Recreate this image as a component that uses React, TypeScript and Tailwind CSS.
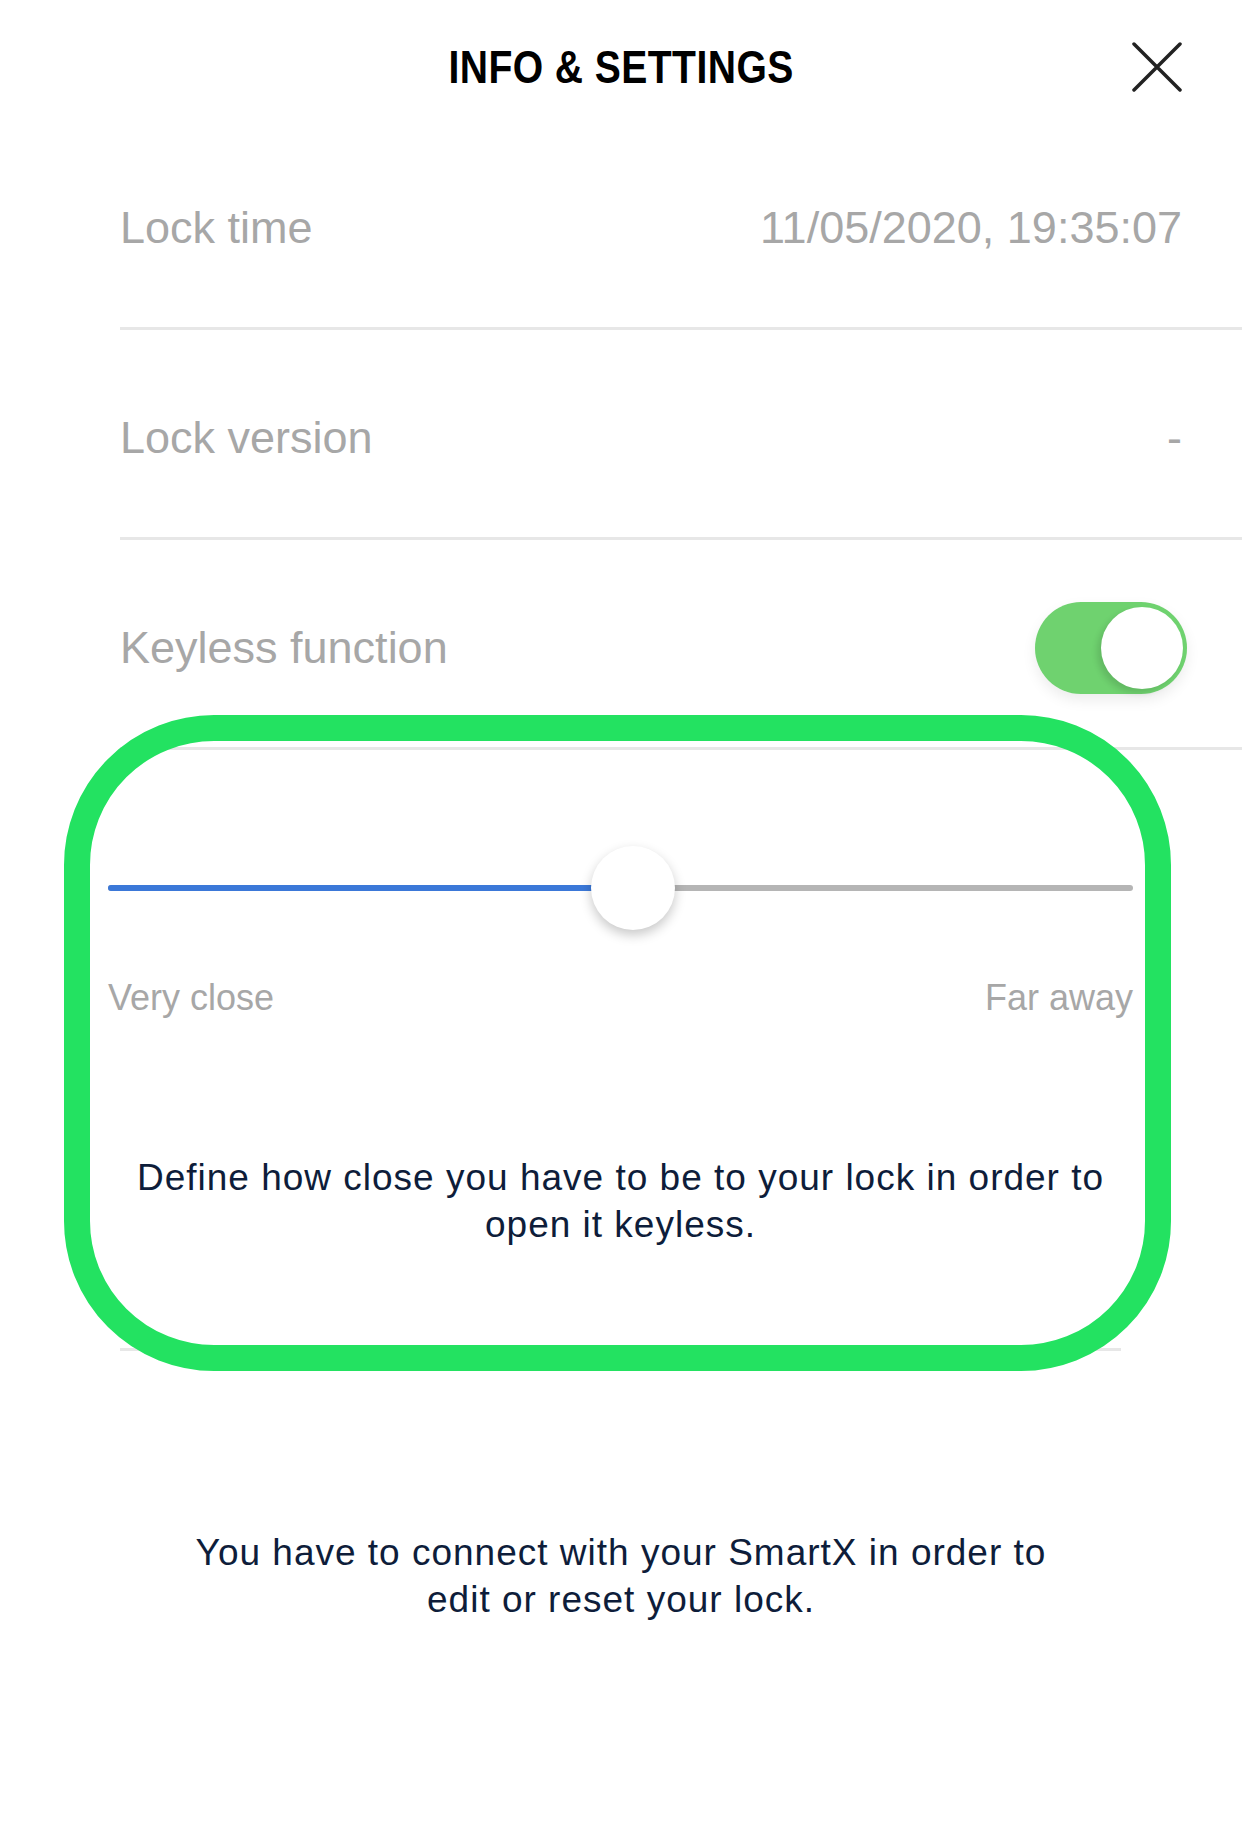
import React from "react";

const rows = [
  { label: "Lock time", value: "11/05/2020, 19:35:07" },
  { label: "Lock version", value: "-" },
];

const range = 0.513;

const CloseIcon = () => (
  <svg width="50" height="50" viewBox="0 0 50 50" fill="none">
    <path d="M2 2 L48 48 M48 2 L2 48" stroke="#222" strokeWidth="3.5" strokeLinecap="round" />
  </svg>
);

const Toggle = () => (
  <div className="relative w-[152px] h-[92px] rounded-full bg-[#6fd26f] shadow-[0_6px_14px_rgba(0,0,0,0.08)]">
    <div className="absolute right-[4px] top-[5px] w-[82px] h-[82px] rounded-full bg-white shadow-[-4px_4px_6px_rgba(0,0,0,0.12)]"></div>
  </div>
);

const Slider = () => {
  const thumb = 84;
  return (
    <div className="relative h-[84px]">
      <div className="absolute left-0 right-0 top-[39px] h-[6px] rounded-full bg-[#b5b5b5]"></div>
      <div
        className="absolute left-0 top-[39px] h-[6px] rounded-full bg-[#3b78d8]"
        style={{ width: `calc((100% - ${thumb}px) * ${range} + ${thumb / 2}px)` }}
      ></div>
      <div
        className="absolute top-0 w-[84px] h-[84px] rounded-full bg-white shadow-[0_5px_12px_rgba(0,0,0,0.22)]"
        style={{ left: `calc((100% - ${thumb}px) * ${range})` }}
      ></div>
    </div>
  );
};

export default function App() {
  return (
    <div className="relative w-[1242px] h-[1826px] bg-white font-['Liberation_Sans',Arial,sans-serif] overflow-hidden">
      {/* header */}
      <div className="grid grid-cols-[1fr_auto_1fr] items-center h-[120px]">
        <div></div>
        <h1 className="text-[46px] leading-none font-bold text-black tracking-[0.5px] scale-x-85 pt-[14px]">
          INFO &amp; SETTINGS
        </h1>
        <div className="flex justify-end pr-[60px] pt-[14px]">
          <CloseIcon />
        </div>
      </div>

      {/* info rows */}
      <div className="ml-[120px]">
        {rows.map((row, idx) => (
          <div
            key={idx}
            className="flex items-center justify-between h-[210px] pt-[8px] pr-[60px] border-b-[3px] border-[#e7e7e7]"
          >
            <span className="text-[45px] text-[#a7a7a7]">{row.label}</span>
            <span className="text-[45px] text-[#a7a7a7]">{row.value}</span>
          </div>
        ))}
        <div className="flex items-center justify-between h-[210px] pt-[8px] pr-[55px] border-b-[3px] border-[#e7e7e7]">
          <span className="text-[45px] text-[#a7a7a7]">Keyless function</span>
          <Toggle />
        </div>
      </div>

      {/* range section */}
      <div className="ml-[108px] w-[1025px] pt-[96px]">
        <Slider />
        <div className="flex justify-between mt-[46px] text-[36px] leading-[44px] text-[#a7a7a7]">
          <span>Very close</span>
          <span>Far away</span>
        </div>
        <p className="mt-[134px] text-center text-[37px] leading-[47px] tracking-[1px] text-[#0e1d3a]">
          Define how close you have to be to your lock in order to open it keyless.
        </p>
        <div className="mx-[12px] mt-[100px] border-b-[3px] border-[#e7e7e7]"></div>
      </div>

      <p className="mt-[178px] mx-auto w-[900px] text-center text-[37px] leading-[47px] tracking-[1px] text-[#0e1d3a]">
        You have to connect with your SmartX in order to edit or reset your lock.
      </p>

      {/* highlight */}
      <div className="absolute left-[64px] top-[715px] w-[1107px] h-[656px] rounded-[150px] border-[26px] border-[#23e261] pointer-events-none"></div>
    </div>
  );
}
